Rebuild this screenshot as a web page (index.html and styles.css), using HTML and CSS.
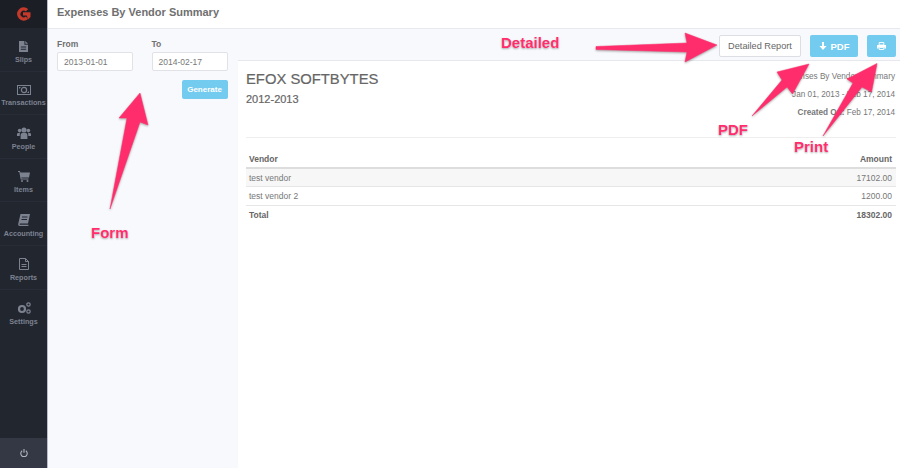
FILE: index.html
```html
<!DOCTYPE html>
<html lang="en">
<head>
    <meta charset="UTF-8">
    <title>Expenses By Vendor Summary</title>
    <link rel="stylesheet" href="styles.css">
</head>
<body>
    <div class="sidebar">
        <div class="logo">
            <svg width="15" height="14" viewBox="0 0 15 14"><path d="M11 3.200A5 5 0 1 0 11 10.800" fill="none" stroke="#c5392a" stroke-width="3.400"/><path d="M7 5.200H14.500V10L12 12.500L10.800 8.500H7Z" fill="#c5392a"/></svg>
        </div>
        <a class="navItem">
            <svg width="9" height="11" viewBox="0 0 10 12"><path d="M0 0H6V4H10V12H0Z M7 0L10 3H7Z M2 6V7H8V6Z M2 8.500V9.500H8V8.500Z" fill="#7d8291" fill-rule="evenodd"/></svg>
            <span>Slips</span>
        </a>
        <a class="navItem">
            <svg width="14" height="10" viewBox="0 0 14 10"><path d="M0 0H14V10H0Z M1 1V9H13V1Z" fill="#7d8291" fill-rule="evenodd"/><circle cx="7" cy="5" r="2.600" fill="none" stroke="#7d8291" stroke-width="1.200"/><path d="M2 2H4L2 4Z M12 8H10L12 6Z" fill="#7d8291"/></svg>
            <span>Transactions</span>
        </a>
        <a class="navItem">
            <svg width="14" height="12" viewBox="0 0 14 12"><circle cx="7" cy="3" r="2.600" fill="#7d8291"/><circle cx="2.600" cy="3.600" r="1.800" fill="#7d8291"/><circle cx="11.400" cy="3.600" r="1.800" fill="#7d8291"/><path d="M3.600 12V8Q3.600 6 5.500 6H8.500Q10.400 6 10.400 8V12Z M0 9V7Q0 6 1.500 6H3Q2.700 7 2.700 9Z M14 9V7Q14 6 12.500 6H11Q11.300 7 11.300 9Z" fill="#7d8291"/></svg>
            <span>People</span>
        </a>
        <a class="navItem">
            <svg width="12" height="11" viewBox="0 0 12 11"><path d="M0 0H2L2.400 1.500H12L11 6.500H3.400L3.600 7.500H10.500V8.500H2.700L1.300 1H0Z" fill="#7d8291"/><circle cx="4" cy="10" r="1" fill="#7d8291"/><circle cx="9.500" cy="10" r="1" fill="#7d8291"/></svg>
            <span>Items</span>
        </a>
        <a class="navItem">
            <svg width="12" height="12" viewBox="0 0 12 12"><path d="M2.500 0H12L10 9.500H1.800Q1.200 10.800 2.200 10.800H10.500L10.300 12H1.500Q-.3 11.500.3 9.500Z M4 2.500V3.500H9.500V2.500Z M3.500 5V6H9V5Z" fill="#7d8291" fill-rule="evenodd"/></svg>
            <span>Accounting</span>
        </a>
        <a class="navItem">
            <svg width="10" height="12" viewBox="0 0 10 12"><path d="M.5.500H6.500L9.500 3.500V11.500H.5Z M6.500.500V3.500H9.500 M2.500 6.500H7.500 M2.500 8.500H7.500" fill="none" stroke="#7d8291"/></svg>
            <span>Reports</span>
        </a>
        <a class="navItem">
            <svg width="14" height="12" viewBox="0 0 14 12"><circle cx="5" cy="7" r="3" fill="none" stroke="#7d8291" stroke-width="2.200"/><circle cx="11.500" cy="2.500" r="1.700" fill="none" stroke="#7d8291" stroke-width="1.200"/><circle cx="11.500" cy="9.500" r="1.700" fill="none" stroke="#7d8291" stroke-width="1.200"/></svg>
            <span>Settings</span>
        </a>
        <div class="powerBar">
            <svg width="8" height="8" viewBox="0 0 8 8"><path d="M2.200 1.800A3.200 3.200 0 1 0 5.800 1.800" fill="none" stroke="#b4b7c0" stroke-width="1.100"/><path d="M4 0V3.800" stroke="#b4b7c0" stroke-width="1.100"/></svg>
        </div>
    </div>

    <div class="main">
        <div class="header">Expenses By Vendor Summary</div>
        <div class="content">
            <div class="filterForm">
                <div class="fields">
                    <div class="field">
                        <label>From</label>
                        <div class="dateInput">2013-01-01</div>
                    </div>
                    <div class="field">
                        <label>To</label>
                        <div class="dateInput">2014-02-17</div>
                    </div>
                </div>
                <div class="formActions">
                    <button class="btnBlue generate">Generate</button>
                </div>
            </div>
            <div class="reportArea">
                <div class="toolbar">
                    <button class="btnWhite">Detailed Report</button>
                    <button class="btnBlue pdf">
                        <svg width="8" height="8" viewBox="0 0 8 8"><path d="M3 0H5V4H7.600L4 8 .4 4H3Z" fill="#fff"/></svg>
                        PDF
                    </button>
                    <button class="btnBlue print">
                        <svg width="9" height="8" viewBox="0 0 9 8"><path d="M2.200.5H6.800V3H2.200Z M2.200 5.500H6.800V7.500H2.200Z" fill="none" stroke="#fff" stroke-width=".9"/><path d="M0 3H9V6.500H7.300V5H1.700V6.500H0Z" fill="#fff"/></svg>
                    </button>
                </div>
                <div class="report">
                    <div class="reportHead">
                        <div>
                            <h1>EFOX SOFTBYTES</h1>
                            <h2>2012-2013</h2>
                        </div>
                        <div class="reportMeta">
                            <p>Expenses By Vendor Summary</p>
                            <p>Jan 01, 2013 - Feb 17, 2014</p>
                            <p><b>Created On:</b> Feb 17, 2014</p>
                        </div>
                    </div>
                    <table>
                        <thead>
                            <tr><th>Vendor</th><th class="amount">Amount</th></tr>
                        </thead>
                        <tbody>
                            <tr class="odd"><td>test vendor</td><td class="amount">17102.00</td></tr>
                            <tr><td>test vendor 2</td><td class="amount">1200.00</td></tr>
                            <tr class="total"><td>Total</td><td class="amount">18302.00</td></tr>
                        </tbody>
                    </table>
                </div>
            </div>
        </div>
    </div>

    <svg class="arrows" width="900" height="468" viewBox="0 0 900 468">
        <g class="arrowShapes">
            <polygon points="140,93 119,118 127,118 110,209 140,122 148,125"/>
            <polygon points="596,46.500 687,43 685,33 717,45 685,62 687,52 596,49.500"/>
            <polygon points="809,64 777,72 782,80 752,116 787,87 792.500,94"/>
            <polygon points="877,63.500 847,79 853,83 823,136 862,87 871.500,92"/>
        </g>
    </svg>
    <div class="callout calloutDetailed">Detailed</div>
    <div class="callout calloutForm">Form</div>
    <div class="callout calloutPdf">PDF</div>
    <div class="callout calloutPrint">Print</div>
</body>
</html>
```

FILE: styles.css
```css
* {
    box-sizing: border-box;
}
body {
    font-family: 'Liberation Sans', Arial, sans-serif;
    background-color: #f8f9fc;
    color: #666;
    margin: 0;
    width: 900px;
    height: 468px;
    display: flex;
    overflow: hidden;
    position: relative;
}
.sidebar {
    width: 48px;
    height: 468px;
    background-color: #22262f;
    border-right: 1px solid #b9bcc6;
    display: flex;
    flex-direction: column;
    flex-shrink: 0;
}
.logo {
    height: 28px;
    background-color: #1b1e25;
    display: flex;
    align-items: center;
    justify-content: center;
}
.navItem {
    height: 43.600px;
    display: flex;
    flex-direction: column;
    align-items: center;
    justify-content: flex-end;
    gap: 3px;
    padding-bottom: 7px;
    border-bottom: 1px solid #282c36;
    color: #7d8291;
    font-size: 7.200px;
    font-weight: bold;
}
.navItem:nth-child(8) {
    border-bottom: none;
}
.powerBar {
    margin-top: auto;
    height: 30px;
    background-color: #343845;
    display: flex;
    align-items: center;
    justify-content: center;
}
.main {
    flex: 1;
    display: flex;
    flex-direction: column;
}
.header {
    height: 29px;
    padding: 6px 9px 0;
    background-color: #fff;
    border-bottom: 1px solid #e8e9ee;
    font-size: 11px;
    font-weight: bold;
    color: #6f6f6f;
}
.content {
    flex: 1;
    display: flex;
}
.filterForm {
    width: 190px;
    padding: 10px 10.500px 0 9px;
}
.fields {
    display: flex;
    justify-content: space-between;
}
.field label {
    display: block;
    font-size: 8.500px;
    font-weight: bold;
    color: #707070;
    margin-bottom: 3px;
}
.dateInput {
    width: 76px;
    height: 19px;
    padding: 4px 6px;
    background-color: #fff;
    border: 1px solid #e0e2e8;
    border-radius: 2px;
    font-size: 8.500px;
    color: #777;
}
.formActions {
    display: flex;
    justify-content: flex-end;
    margin-top: 9px;
}
.btnBlue {
    background-color: #73cbef;
    color: #fff;
    border: none;
    border-radius: 2px;
    font-family: inherit;
    font-weight: bold;
}
.generate {
    width: 46px;
    height: 19px;
    padding: 0;
    font-size: 8px;
}
.reportArea {
    flex: 1;
    display: flex;
    flex-direction: column;
}
.toolbar {
    height: 32px;
    padding: 6px 4px 0 0;
    border-bottom: 1px solid #e6e8ed;
    display: flex;
    justify-content: flex-end;
    gap: 9px;
}
.btnWhite {
    width: 82px;
    height: 22px;
    padding: 0;
    background-color: #fff;
    border: 1px solid #dcdee4;
    border-radius: 2px;
    font-family: inherit;
    font-size: 9.200px;
    color: #666;
}
.pdf {
    width: 48px;
    height: 22px;
    padding: 0;
    font-size: 9.500px;
    display: flex;
    align-items: center;
    justify-content: center;
    gap: 4px;
}
.print {
    width: 29px;
    height: 22px;
    padding: 0;
    display: flex;
    align-items: center;
    justify-content: center;
}
.report {
    flex: 1;
    background-color: #fff;
    padding: 9px 4px 0 8px;
}
.reportHead {
    height: 68px;
    display: flex;
    justify-content: space-between;
    border-bottom: 1px solid #eee;
}
h1 {
    margin: 0;
    font-size: 14.800px;
    font-weight: normal;
    line-height: 18px;
    color: #666;
    -webkit-text-stroke: 0.2px #666;
}
h2 {
    margin: 5px 0 0;
    font-size: 11px;
    font-weight: normal;
    line-height: 13px;
    color: #666;
    -webkit-text-stroke: 0.2px #666;
}
.reportMeta {
    text-align: right;
    font-size: 8.200px;
    color: #777;
    padding: 2px 1px 0 0;
}
.reportMeta p {
    margin: 0 0 8px;
    line-height: 10px;
}
table {
    width: 100%;
    margin-top: 12px;
    border-collapse: collapse;
    font-size: 8.500px;
    color: #777;
}
th {
    text-align: left;
    height: 18px;
    padding: 0 3px;
    border-bottom: 2px solid #ddd;
    color: #666;
}
td {
    height: 18.500px;
    padding: 0 3px;
    border-bottom: 1px solid #e6e6e6;
}
th.amount, td.amount {
    text-align: right;
    padding-right: 4px;
}
.odd {
    background-color: #f7f7f7;
}
.total td {
    border-bottom: none;
    font-weight: bold;
    color: #666;
}
.arrows {
    position: absolute;
    left: 0;
    top: 0;
    pointer-events: none;
}
.arrowShapes {
    fill: #ff2d6b;
    stroke: #ff2d6b;
    stroke-width: 0.500;
    stroke-linejoin: round;
    filter: drop-shadow(0 1px 1px rgba(0, 0, 0, 0.35));
}
.callout {
    position: absolute;
    font-size: 15px;
    line-height: 16px;
    font-weight: bold;
    color: #ff2d6b;
    text-shadow: 0 0 1px #fff, 0 1px 2px rgba(0, 0, 0, 0.35);
}
.calloutDetailed {
    left: 501px;
    top: 35px;
}
.calloutForm {
    left: 91px;
    top: 225px;
}
.calloutPdf {
    left: 718px;
    top: 122px;
}
.calloutPrint {
    left: 794px;
    top: 139px;
}
```
